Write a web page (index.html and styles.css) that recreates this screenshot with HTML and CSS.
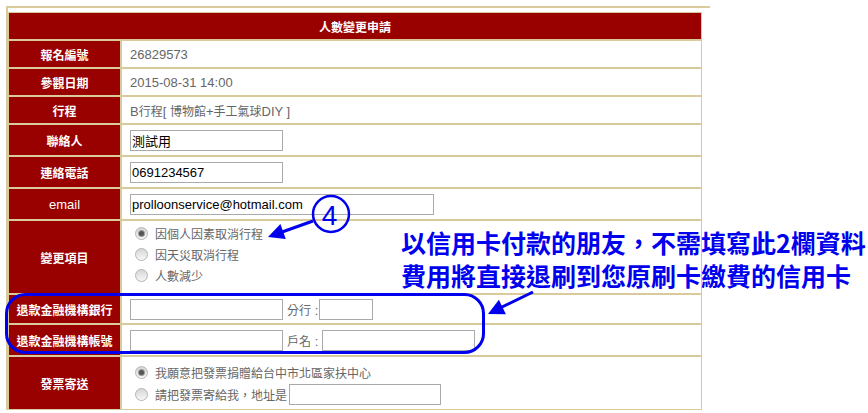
FILE: index.html
```html
<!DOCTYPE html>
<html lang="zh-Hant">
<head>
<meta charset="utf-8">
<title>人數變更申請</title>
<link rel="stylesheet" href="styles.css">
</head>
<body>
<div class="page">
  <div class="frame">
    <table class="form">
      <colgroup><col class="c1"><col class="c2"></colgroup>
      <tr class="h28"><td colspan="2" class="head">人數變更申請</td></tr>
      <tr class="h28"><td class="lbl">報名編號</td><td class="val">26829573</td></tr>
      <tr class="h28"><td class="lbl">參觀日期</td><td class="val">2015-08-31 14:00</td></tr>
      <tr class="h28"><td class="lbl">行程</td><td class="val">B<span class="zh">行程</span>[ <span class="zh">博物館</span>+<span class="zh">手工氣球</span>DIY ]</td></tr>
      <tr class="h32"><td class="lbl">聯絡人</td><td class="val"><input class="inp w153" type="text" value="測試用"></td></tr>
      <tr class="h32"><td class="lbl">連絡電話</td><td class="val"><input class="inp w153" type="text" value="0691234567"></td></tr>
      <tr class="h32"><td class="lbl lat">email</td><td class="val"><input class="inp w304" type="text" value="prolloonservice@hotmail.com"></td></tr>
      <tr class="h74"><td class="lbl">變更項目</td><td class="val opts">
        <div class="opt"><span class="radio on"></span><span class="zh">因個人因素取消行程</span></div>
        <div class="opt"><span class="radio"></span><span class="zh">因天災取消行程</span></div>
        <div class="opt"><span class="radio"></span><span class="zh">人數減少</span></div>
      </td></tr>
      <tr class="h30"><td class="lbl">退款金融機構銀行</td><td class="val"><input class="inp w153" type="text"><span class="sub"><span class="zh">分行</span> :</span><input class="inp w54 tight" type="text"></td></tr>
      <tr class="h32"><td class="lbl">退款金融機構帳號</td><td class="val"><input class="inp w153" type="text"><span class="sub"><span class="zh">戶名</span> : </span><input class="inp w153" type="text"></td></tr>
      <tr class="h54"><td class="lbl">發票寄送</td><td class="val opts2">
        <div class="opt2"><span class="radio on"></span><span class="zh">我願意把發票捐贈給台中市北區家扶中心</span></div>
        <div class="opt2"><span class="radio"></span><span class="zh">請把發票寄給我，地址是</span><input class="inp w152 addr" type="text"></div>
      </td></tr>
    </table>
  </div>

  <svg class="marks" width="868" height="413" viewBox="0 0 868 413">
    <rect x="6.5" y="294.5" width="477" height="58" rx="19" ry="19" fill="none" stroke="#0000ee" stroke-width="3"/>
    <circle cx="331" cy="214" r="18" fill="none" stroke="#0000ee" stroke-width="2.5"/>
    <text x="329.5" y="225" text-anchor="middle" font-size="28" fill="#0000ee" font-family="Liberation Sans, sans-serif">4</text>
    <line x1="313" y1="221" x2="282" y2="232" stroke="#0000ee" stroke-width="3"/>
    <polygon points="268,237 285.8,239.1 280.4,224.1" fill="#0000ee"/>
    <line x1="533" y1="292" x2="500" y2="308" stroke="#0000ee" stroke-width="3"/>
    <polygon points="488,314 505.9,314.2 498.9,299.8" fill="#0000ee"/>
  </svg>

  <div class="note">以信用卡付款的朋友，不需填寫此2欄資料<br>費用將直接退刷到您原刷卡繳費的信用卡</div>
</div>
</body>
</html>
```

FILE: styles.css
```css
body {
  margin: 0;
  background: #ffffff;
  font-family: "Liberation Sans", "Noto Sans CJK TC", sans-serif;
}

.page {
  position: relative;
  width: 868px;
  height: 413px;
  overflow: hidden;
}

.frame {
  margin: 6px 0 0 6px;
  width: 702px;
  border-top: 2px solid #d9ca9c;
  border-left: 2px solid #d9ca9c;
  padding-top: 4px;
}

.form {
  border-collapse: separate;
  border-spacing: 0;
  width: 694px;
  table-layout: fixed;
}

.c1 { width: 113px; }
.c2 { width: 581px; }

.form td {
  border: 1px solid #d9ca9c;
  box-sizing: border-box;
  padding: 0;
  vertical-align: middle;
}

.h28 td { height: 28px; }
.h30 td { height: 30px; }
.h32 td { height: 32px; }
.h54 td { height: 54px; }
.h74 td { height: 74px; }

.head {
  background: #990000;
  color: #ffffff;
  font-weight: bold;
  font-size: 12px;
  text-align: center;
  font-family: "Noto Sans CJK TC", sans-serif;
}

.lbl {
  background: #990000;
  color: #ffffff;
  font-weight: bold;
  font-size: 12px;
  text-align: center;
  font-family: "Noto Sans CJK TC", sans-serif;
}

.lbl.lat {
  font-weight: normal;
  font-size: 13px;
  font-family: "Liberation Sans", sans-serif;
}

.form td.val {
  padding-left: 8px;
  color: #666666;
  font-size: 13px;
  white-space: nowrap;
}

.zh {
  font-size: 12px;
  font-family: "Noto Sans CJK TC", sans-serif;
}

.inp {
  box-sizing: border-box;
  height: 21px;
  margin: 0;
  padding: 0 1px;
  border: 1px solid #aaaaaa;
  background: #ffffff;
  color: #000000;
  font-family: "Liberation Sans", "Noto Sans CJK TC", sans-serif;
  font-size: 13px;
  vertical-align: middle;
  outline: none;
}

.w153 { width: 153px; }
.w304 { width: 304px; }
.w54 { width: 54px; }
.w152 { width: 152px; }
.addr { margin-left: 2px; }
.tight { margin-left: 1px; }

.sub {
  margin-left: 4px;
  vertical-align: middle;
}

.form td.opts {
  padding-bottom: 5px;
}

.opt {
  display: flex;
  align-items: center;
  height: 21px;
}

.opt2 {
  display: flex;
  align-items: center;
  height: 22px;
}

.radio {
  position: relative;
  display: inline-block;
  flex: none;
  width: 13px;
  height: 13px;
  box-sizing: border-box;
  margin: 0 7px 0 5px;
  border: 1px solid #b4b4b4;
  border-radius: 50%;
  background: linear-gradient(#d6d6d6, #f7f7f7);
}

.radio.on::after {
  content: "";
  position: absolute;
  left: 3px;
  top: 3px;
  width: 5px;
  height: 5px;
  border-radius: 50%;
  background: #555555;
  box-shadow: 0 0 0 1px #9a9a9a;
}

.marks {
  position: absolute;
  left: 0;
  top: 0;
  pointer-events: none;
}

.note {
  position: absolute;
  left: 401px;
  top: 226px;
  font-family: "Noto Sans CJK TC", sans-serif;
  font-weight: bold;
  font-size: 25px;
  line-height: 33px;
  color: #0000ee;
  white-space: nowrap;
}
```
